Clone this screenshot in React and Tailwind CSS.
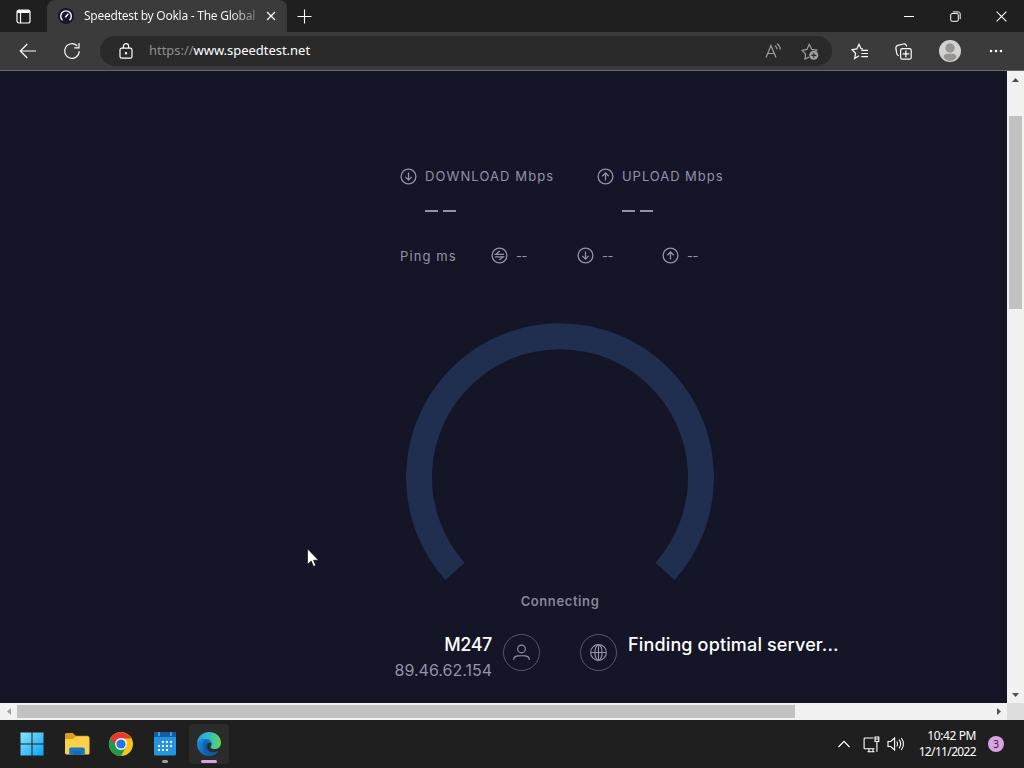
import React from "react";

const DownCircle = () => (
  <svg width="17" height="17" viewBox="0 0 17 17" fill="none" stroke="currentColor" strokeWidth="1.3" className="shrink-0">
    <circle cx="8.5" cy="8.5" r="7.4" />
    <path d="M8.5 4.6v7.4M5.3 8.9l3.2 3.2 3.2-3.2" />
  </svg>
);

const UpCircle = () => (
  <svg width="17" height="17" viewBox="0 0 17 17" fill="none" stroke="currentColor" strokeWidth="1.3" className="shrink-0">
    <circle cx="8.5" cy="8.5" r="7.4" />
    <path d="M8.5 12.6V5M5.3 8.2l3.2-3.2 3.2 3.2" />
  </svg>
);

const PingCircle = () => (
  <svg width="17" height="17" viewBox="0 0 17 17" fill="none" stroke="currentColor" strokeWidth="1.3" className="shrink-0">
    <circle cx="8.5" cy="8.5" r="7.4" />
    <path d="M13 7.300H4.800L8.800 4M4 9.900h8.200l-4 3.200" />
  </svg>
);

const TabBar = () => (
  <div className="flex h-8 bg-[#1f1f1f] text-white">
    <div className="flex w-[47px] items-center justify-center">
      <svg width="15" height="15" viewBox="0 0 15 15" fill="none" stroke="currentColor" strokeWidth="1.2">
        <rect x="1" y="1" width="13" height="13" rx="2" />
        <path d="M1.5 2.6h12" strokeWidth="2.8" />
        <path d="M4.5 4v10" />
      </svg>
    </div>
    <div className="flex w-60 items-center rounded-t-lg bg-[#3b3b3b] pl-[11px]">
      <svg width="16" height="16" viewBox="0 0 16 16" fill="none" className="shrink-0">
        <circle cx="8" cy="8" r="8" fill="#17172b" />
        <path d="M4.5 12.2a5.3 5.3 0 1 1 7 0" stroke="#fff" strokeWidth="1.4" />
        <path d="M7.3 9.3l3-3.6" stroke="#fff" strokeWidth="1.5" />
      </svg>
      <span className="ml-[10px] w-[172px] overflow-hidden whitespace-nowrap bg-gradient-to-r from-white from-85% to-[#777] bg-clip-text text-xs tracking-[-0.25px] text-transparent">
        Speedtest by Ookla - The Global
      </span>
      <svg width="10" height="10" viewBox="0 0 10 10" stroke="currentColor" strokeWidth="1.2" className="ml-[10px]">
        <path d="M1 1l8 8M9 1L1 9" />
      </svg>
    </div>
    <div className="flex w-[35px] items-center justify-center">
      <svg width="15" height="15" viewBox="0 0 15 15" stroke="currentColor" strokeWidth="1.1">
        <path d="M7.5 .5v14M.5 7.5h14" />
      </svg>
    </div>
    <div className="ml-auto flex">
      <div className="flex w-[46px] items-center justify-center">
        <svg width="10" height="10" viewBox="0 0 10 10" stroke="currentColor">
          <path d="M0 5.5h10" />
        </svg>
      </div>
      <div className="flex w-[46px] items-center justify-center">
        <svg width="11" height="11" viewBox="0 0 11 11" fill="none" stroke="currentColor">
          <rect x=".7" y="2.5" width="7.6" height="7.8" rx="1.4" />
          <path d="M2.8 .9h5.4a2 2 0 0 1 2 2v5.2" />
        </svg>
      </div>
      <div className="flex w-[46px] items-center justify-center">
        <svg width="11" height="11" viewBox="0 0 11 11" stroke="currentColor" strokeWidth="1.1">
          <path d="M.6 .6l9.8 9.8M10.4 .6L.6 10.4" />
        </svg>
      </div>
    </div>
  </div>
);

const Toolbar = () => (
  <div className="flex h-[39px] items-center border-b border-[#686868] bg-[#3b3b3b] text-white">
    <svg width="18" height="16" viewBox="0 0 18 16" fill="none" stroke="currentColor" strokeWidth="1.2" className="ml-[19px]">
      <path d="M17 8H1.5M8.3 1L1.3 8l7 7" />
    </svg>
    <svg width="18" height="18" viewBox="0 0 18 18" fill="none" stroke="currentColor" strokeWidth="1.2" className="ml-[26px]">
      <path d="M16.2 9.2A7.3 7.3 0 1 1 14.2 4M16 1v4.8h-4.8" />
    </svg>
    <div className="ml-[19px] flex h-[30px] w-[732px] items-center rounded-full bg-[#2a2a2a] pl-[19px] pr-[13px]">
      <svg width="14" height="16" viewBox="0 0 14 16" fill="none" stroke="currentColor" strokeWidth="1.2">
        <rect x="1" y="5.2" width="12" height="10" rx="1.8" />
        <path d="M4.4 5V3.2a2.6 2.6 0 0 1 5.2 0V5" />
        <circle cx="7" cy="10.2" r=".6" fill="currentColor" />
      </svg>
      <span className="ml-4 text-[13px] tracking-[-0.03px]">
        <span className="text-[#8f8f8f]">https://</span>www.speedtest.net
      </span>
      <svg width="17" height="16" viewBox="0 0 17 16" fill="none" stroke="#a0a0a0" strokeWidth="1.2" className="ml-auto">
        <path d="M1 14.5L6 2.5l5 12M2.7 10.5h6.6M10 2.8c1.2.8 1.9 2 2 3.4M12 .8c2 1.4 3.2 3.4 3.3 5.8" />
      </svg>
      <svg width="18" height="17" viewBox="0 0 18 17" fill="none" stroke="#a0a0a0" strokeWidth="1.2" className="ml-[19px]">
        <path d="M8 14.1L4 16l.6-4.9L1.1 7.4l4.8-1L8.3 1.3l2.5 5.1 5 .8-1.2 1.4" />
        <circle cx="12.8" cy="12.3" r="4.5" fill="#a0a0a0" stroke="none" />
        <path d="M12.8 9.8v5M10.3 12.3h5" stroke="#2a2a2a" />
      </svg>
    </div>
    <svg width="17" height="17" viewBox="0 0 17 17" fill="none" stroke="currentColor" strokeWidth="1.2" className="ml-[19px]">
      <path d="M8 12.8L3.6 15.6l1-5.3L1 6.6l4.8-.7L8 1.3l1.9 4.2 2 .3M10.3 7.3H17M10.3 10.5H17M10.3 13.7H17" />
    </svg>
    <svg width="17" height="17" viewBox="0 0 17 17" fill="none" stroke="currentColor" strokeWidth="1.2" className="ml-[27px]">
      <rect x="5.6" y="5.6" width="10.6" height="10.6" rx="1.8" />
      <path d="M10.9 7.6v6.6M7.6 10.9h6.6M3.7 12.8C2.5 12.3 2 11.4 1.7 10.4L.9 5.3C.7 3.7 1.3 2.8 2.9 2.4L8.5 1c1.4-.3 2.4.2 2.9 1.6l.3.9" />
    </svg>
    <svg width="22" height="22" viewBox="0 0 22 22" className="ml-[27px]">
      <circle cx="11" cy="11" r="11" fill="#d4d2d0" />
      <circle cx="11" cy="8" r="4.7" fill="#979593" />
      <path d="M4.5 17.2c0-2.3 1.5-3.5 3.5-3.5h6c2 0 3.5 1.2 3.5 3.5-1.5 2.4-3.8 3.8-6.5 3.8s-5-1.4-6.5-3.8z" fill="#979593" />
    </svg>
    <svg width="14" height="4" viewBox="0 0 14 4" fill="currentColor" className="ml-7">
      <circle cx="2" cy="2" r="1.3" />
      <circle cx="7" cy="2" r="1.3" />
      <circle cx="12" cy="2" r="1.3" />
    </svg>
  </div>
);

const EmptyValue = () => (
  <div className="flex gap-[5px]">
    <div className="h-0.5 w-[13px] bg-[#9193a8]" />
    <div className="h-0.5 w-[13px] bg-[#9193a8]" />
  </div>
);

const Speedtest = () => (
  <div className="flex-1 overflow-hidden bg-[#141526] pt-[94px] font-['Inter',sans-serif] text-[#9193a8]">
    <div className="flex h-[23px] items-center pl-[400px] text-[13px]">
      <div className="flex w-[197px] items-center gap-2">
        <DownCircle />
        <span className="whitespace-nowrap pt-px tracking-[1.1px]">DOWNLOAD Mbps</span>
      </div>
      <div className="flex items-center gap-2">
        <UpCircle />
        <span className="whitespace-nowrap pt-px tracking-[0.95px]">UPLOAD Mbps</span>
      </div>
    </div>

    <div className="mt-[11px] flex h-6 items-center pl-[425px]">
      <div className="w-[197px]">
        <EmptyValue />
      </div>
      <EmptyValue />
    </div>

    {/* Ping */}
    <div className="mt-[21px] flex h-[23px] items-center pl-[400px] text-[13px]">
      <span className="w-[91px] pt-0.5 tracking-[1.1px]">Ping ms</span>
      <div className="flex w-[86px] items-center gap-2">
        <PingCircle />
        <span className="pt-0.5 tracking-[-0.4px]">--</span>
      </div>
      <div className="flex w-[85px] items-center gap-2">
        <DownCircle />
        <span className="pt-0.5 tracking-[-0.4px]">--</span>
      </div>
      <div className="flex items-center gap-2">
        <UpCircle />
        <span className="pt-0.5 tracking-[-0.4px]">--</span>
      </div>
    </div>

    {/* Gauge */}
    <svg width="308" height="258" viewBox="0 0 308 258" fill="none" className="ml-[406px] mt-14">
      <path d="M49 248.400A141 141 0 1 1 259 248.400" stroke="#202e50" strokeWidth="26" />
    </svg>
    <div className="ml-[406px] mt-[9px] flex h-6 w-[308px] items-center justify-center text-[13px] font-semibold tracking-[0.6px] text-[#85879a]">
      Connecting
    </div>

    <div className="mt-[17px] flex text-lg leading-[26px]">
      <div className="w-[492px] pt-px text-right">
        <div className="font-medium tracking-[-0.4px] text-white">M247</div>
        <div className="text-base">89.46.62.154</div>
      </div>
      <div className="ml-[11px] mt-[3px] flex size-[37px] items-center justify-center rounded-full border border-[#56586c]">
        <svg width="17" height="18" viewBox="0 0 18 18" fill="none" stroke="currentColor" strokeWidth="1.2">
          <circle cx="9" cy="4.700" r="4.100" />
          <path d="M.8 16.500v-.7c0-2 1.500-3.300 4.200-3.700 2.700-.3 5.300-.3 8 0 2.700.4 4.200 1.700 4.200 3.700v.7" />
        </svg>
      </div>
      <div className="ml-10 mt-[3px] flex size-[37px] items-center justify-center rounded-full border border-[#56586c]">
        <svg width="17" height="17" viewBox="0 0 18 18" fill="none" stroke="currentColor" strokeWidth="1.2">
          <circle cx="9" cy="9" r="8.300" />
          <ellipse cx="9" cy="9" rx="3.800" ry="8.300" />
          <path d="M9 1v16M1 9h16" />
        </svg>
      </div>
      <div className="ml-[11px] whitespace-nowrap pt-px font-medium tracking-[0.15px] text-white">
        Finding optimal server...
      </div>
    </div>
  </div>
);

const VerticalScroll = () => (
  <div className="flex w-[17px] flex-col items-center bg-[#f1f1f1]">
    <div className="flex h-[17px] items-center">
      <svg width="7" height="4" viewBox="0 0 7 4">
        <path d="M0 4L3.500 0 7 4z" fill="#505050" />
      </svg>
    </div>
    <div className="mt-7 h-[193px] w-[13px] bg-[#c1c1c1]" />
    <div className="mt-auto flex h-[17px] items-center">
      <svg width="7" height="4" viewBox="0 0 7 4">
        <path d="M0 0h7L3.500 4z" fill="#505050" />
      </svg>
    </div>
  </div>
);

const HorizontalScroll = () => (
  <div className="flex h-[17px] bg-[#f1f1f1]">
    <div className="flex w-[17px] items-center justify-center">
      <svg width="4" height="7" viewBox="0 0 4 7">
        <path d="M4 0v7L0 3.500z" fill="#a3a3a3" />
      </svg>
    </div>
    <div className="my-0.5 w-[778px] bg-[#c1c1c1]" />
    <div className="ml-auto flex w-[17px] items-center justify-center">
      <svg width="4" height="7" viewBox="0 0 4 7">
        <path d="M0 0v7l4-3.500z" fill="#505050" />
      </svg>
    </div>
    <div className="w-[17px] bg-[#dcdcdc]" />
  </div>
);

const Taskbar = () => (
  <div className="flex h-12 items-center bg-[#1f1f1f] pl-[10px] text-white">
    {/* Start */}
    <div className="flex w-11 justify-center">
      <svg width="24" height="24" viewBox="0 0 24 24">
        <defs>
          <linearGradient id="win" x1="0" y1="0" x2="1" y2="1">
            <stop offset="0" stopColor="#8be3fd" />
            <stop offset="1" stopColor="#0aa5f2" />
          </linearGradient>
        </defs>
        <path d="M.5.5h11v11H.5zM12.500.5h11v11h-11zM.5 12.500h11v11H.5zM12.500 12.500h11v11h-11z" fill="url(#win)" />
      </svg>
    </div>
    {/* File Explorer */}
    <div className="flex w-[46px] justify-center">
      <svg width="26" height="24" viewBox="0 0 26 24">
        <path d="M1 2.500C1 1.700 1.700 1 2.500 1h6.300l3 2.800H23c1 0 1.500.7 1.500 1.500V10H1z" fill="#dc9e16" />
        <path d="M1 7h8l2.500-2.500H24c.8 0 1.500.7 1.500 1.500v15c0 .8-.7 1.500-1.500 1.500H2.500C1.700 22.500 1 21.800 1 21z" fill="#fbd04b" />
        <path d="M5.200 22.500v-5.200c0-1 .8-1.800 1.800-1.800h12c1 0 1.800.8 1.800 1.800v5.200z" fill="#1878bf" />
        <path d="M9 22.500v-2.300c0-.6.4-1 1-1h6c.6 0 1 .4 1 1v2.300z" fill="#1467ab" />
      </svg>
    </div>
    {/* Chrome */}
    <div className="flex w-[42px] justify-center">
      <svg width="24" height="24" viewBox="0 0 24 24">
        <circle cx="12" cy="12" r="12" fill="#fbc416" />
        <path d="M12 12L1.600 6A12 12 0 0 0 12 24l5-9z" fill="#21994a" />
        <path d="M1.600 6a12 12 0 0 1 20.800 0.500H12L7.300 14.700z" fill="#e33b2e" />
        <circle cx="12" cy="12" r="5.900" fill="#fff" />
        <circle cx="12" cy="12" r="4.600" fill="#2b72e6" />
      </svg>
    </div>
    {/* Calendar */}
    <div className="flex h-12 w-[46px] flex-col items-center pt-3">
      <svg width="22" height="24" viewBox="0 0 22 24">
        <rect y="0" width="22" height="23.500" rx="1.500" fill="#2595df" />
        <path d="M0 5V1.500C0 .7.7 0 1.500 0h19c.8 0 1.500.7 1.500 1.500V5z" fill="#155ca5" />
        <path d="M5 0v4M17 0v4" stroke="#58b4ea" strokeWidth="1.500" />
        <path d="M8 10h11M4 14h15M4 18h11" stroke="#fff" strokeWidth="2" strokeDasharray="2 2" />
      </svg>
      <div className="mt-1 h-[3px] w-1.5 rounded-full bg-[#a0a0a0]" />
    </div>
    {/* Edge */}
    <div className="ml-px flex h-10 w-10 flex-col items-center rounded bg-[#2b2b2b] pt-2">
      <svg width="24" height="24" viewBox="0 0 24 24">
        <defs>
          <linearGradient id="edgeTop" x1="0" y1="0.5" x2="1" y2="0.5">
            <stop offset="0" stopColor="#299fdd" />
            <stop offset="0.5" stopColor="#2fbdc7" />
            <stop offset="1" stopColor="#62d957" />
          </linearGradient>
          <linearGradient id="edgeLow" x1="0" y1="0" x2="1" y2="1">
            <stop offset="0" stopColor="#1b91d8" />
            <stop offset="1" stopColor="#0d4fa0" />
          </linearGradient>
        </defs>
        <path d="M0 12C0 5 5 0 12 0s12 4.800 12 10.800c0 4-2.800 6.300-6.200 6.300-2.600 0-4.300-.9-4.300-1.900 0-.8 1.100-1.100 1.100-3.200 0-2.800-2.600-5-6.300-5C4 7 1 9.300 0 12z" fill="url(#edgeTop)" />
        <path d="M0 12c.8-3.100 4.100-5 8-5 3.800 0 6.600 2.100 6.600 5-.8-1.200-1.800-1.500-2.700-1.500-3.200.8-4.500 5.500-1.600 8.200 2.700 2.500 7.500 2.600 11.500-.1C19.700 22 16.200 24 12 24 5.200 24 0 18.700 0 12z" fill="url(#edgeLow)" />
        <path d="M8 7.500c-4 2.500-3.500 14 4 16.500 4 0 7.400-1.900 9.500-5.100-6 3.300-14.500-.5-9.600-8.400-.7-1.700-2-2.600-3.900-3z" fill="#0c5aaa" opacity=".65" />
      </svg>
      <div className="mt-1 h-[3px] w-4 rounded-full bg-[#d2a6dc]" />
    </div>

    <div className="ml-auto flex items-center pr-5">
      <svg width="12" height="8" viewBox="0 0 12 8" fill="none" stroke="currentColor" strokeWidth="1.200">
        <path d="M.5 7L6 1.300 11.500 7" />
      </svg>
      <svg width="17" height="17" viewBox="0 0 17 17" fill="none" stroke="currentColor" strokeWidth="1.100" className="ml-[13px]">
        <path d="M10.500 2H2c-.6 0-.9.3-.9.900v9c0 .6.300.9.900.9h9.500M4.500 15.700h7M6 12.800v2.900M10 12.800v2.900" />
        <path d="M12 1h3.800v4.500h-3.800zM12 3h3.800M13.900 5.500v10.200" />
      </svg>
      <svg width="18" height="16" viewBox="0 0 18 16" fill="none" stroke="currentColor" strokeWidth="1.100" className="ml-[7px]">
        <path d="M1 5.500h2.700L7.600 2v12l-3.900-3.500H1zM9.800 5.500c1 1.500 1 3.500 0 5M12 3.600c2 2.600 2 6.200 0 8.800M14.200 2c3 3.500 3 8.500 0 12" />
      </svg>
      <div className="ml-3 w-[59px] whitespace-nowrap text-right text-xs leading-4">
        <div className="tracking-[-0.4px]">10:42 PM</div>
        <div className="tracking-[-0.65px]">12/11/2022</div>
      </div>
      <div className="ml-3 flex size-4 items-center justify-center rounded-full bg-[#d9a2e4] text-[10px] text-[#30203a]">
        3
      </div>
    </div>
  </div>
);

const App = () => {
  return (
    <div className="relative flex h-[768px] w-[1024px] flex-col overflow-hidden font-['Noto_Sans','Open_Sans',sans-serif]">
      <TabBar />
      <Toolbar />
      <div className="flex h-[632px]">
        <Speedtest />
        <VerticalScroll />
      </div>
      <HorizontalScroll />
      <Taskbar />
      {/* Mouse pointer */}
      <svg width="12" height="19" viewBox="0 0 12 19" className="absolute left-[307px] top-[548px]">
        <path d="M.5.8v15.700l3.700-3.500 2.300 5.400 2.300-1-2.300-5.200h5z" fill="#fff" stroke="#000" strokeWidth=".6" />
      </svg>
    </div>
  );
};

export default App;
